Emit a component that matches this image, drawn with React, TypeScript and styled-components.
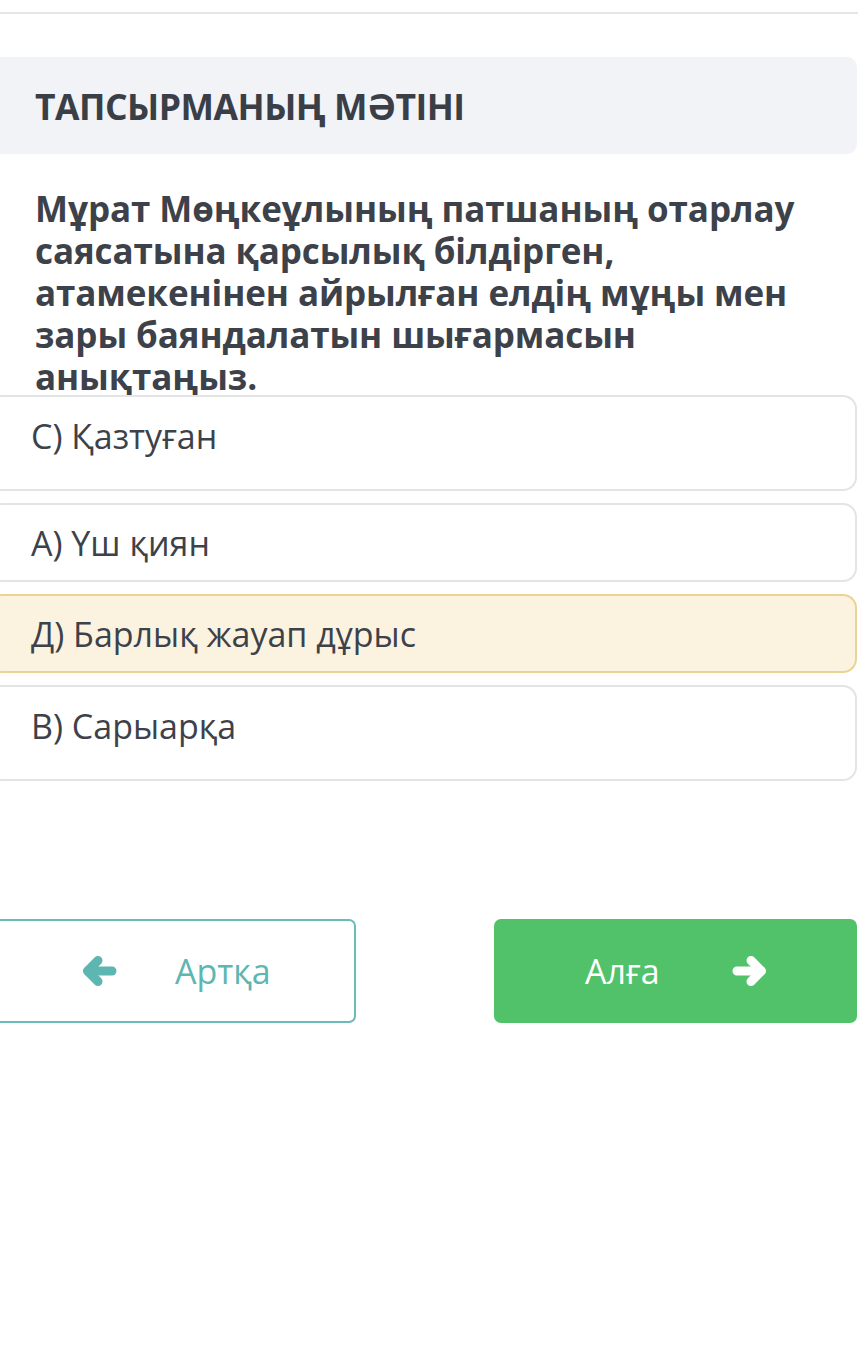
import React from "react";
import styled, { createGlobalStyle } from "styled-components";

const GlobalStyle = createGlobalStyle`
  html, body {
    margin: 0;
    padding: 0;
    background: #ffffff;
  }
  body {
    font-family: "Open Sans", "Noto Sans", sans-serif;
    color: #3d4149;
    overflow-x: hidden;
  }
`;

type Option = {
  label: string;
  tall?: boolean;
  selected?: boolean;
};

const options: Option[] = [
  { label: "C) Қазтуған", tall: true },
  { label: "A) Үш қиян" },
  { label: "Д) Барлық жауап дұрыс", selected: true },
  { label: "B) Сарыарқа", tall: true },
];

// chunky arrow like the old font-awesome glyph
const Arrow: React.FunctionComponent<{ dir: "left" | "right" }> = ({ dir }) => (
  <svg
    width="35"
    height="32"
    viewBox="0 0 35 32"
    style={dir === "right" ? { transform: "scaleX(-1)" } : undefined}
  >
    <g
      fill="none"
      stroke="currentColor"
      strokeWidth="9"
      strokeLinecap="round"
      strokeLinejoin="round"
    >
      <polyline points="16,5.5 5.5,16 16,26.5" />
      <line x1="6" y1="16" x2="30" y2="16" />
    </g>
  </svg>
);

const App: React.FunctionComponent<{}> = () => {
  return (
    <>
      <GlobalStyle />
      <Page>
        <TopRule />
        <Content>
          <TaskHeader>
            <TaskTitle>ТАПСЫРМАНЫҢ МӘТІНІ</TaskTitle>
          </TaskHeader>

          <Question>
            Мұрат Мөңкеұлының патшаның отарлау саясатына қарсылық білдірген,
            атамекенінен айрылған елдің мұңы мен зары баяндалатын шығармасын
            анықтаңыз.
          </Question>

          <OptionList>
            {options.map(o => (
              <OptionBox key={o.label} $tall={o.tall} $selected={o.selected}>
                {o.label}
              </OptionBox>
            ))}
          </OptionList>

          <NavRow>
            <BackButton>
              <Arrow dir="left" />
              <span>Артқа</span>
            </BackButton>
            <NextButton>
              <span>Алға</span>
              <Arrow dir="right" />
            </NextButton>
          </NavRow>
        </Content>
      </Page>
    </>
  );
};

const Page = styled.div`
  width: 858px;
  min-height: 1366px;
  padding-top: 12px;
  box-sizing: border-box;
`;

const TopRule = styled.div`
  height: 2px;
  background: #e6e6e8;
`;

const Content = styled.div`
  margin-left: -12px;
  width: 869px;
  display: flex;
  flex-direction: column;
`;

const TaskHeader = styled.div`
  margin-top: 43px;
  height: 97px;
  background: #f2f3f7;
  border-radius: 10px;
  display: flex;
  align-items: center;
  padding-left: 47px;
`;

const TaskTitle = styled.h2`
  margin: 0;
  font-size: 35.5px;
  font-weight: 700;
  color: #3a3f47;
  letter-spacing: -0.5px;
`;

const Question = styled.p`
  margin: 34px 0 0;
  padding: 0 40px 0 47px;
  font-size: 35px;
  line-height: 42px;
  font-weight: 700;
  color: #3d4149;
  letter-spacing: -0.1px;
`;

const OptionList = styled.div`
  margin-top: -3px;
  display: flex;
  flex-direction: column;
  gap: 12px;
`;

const OptionBox = styled.div<{ $tall?: boolean; $selected?: boolean }>`
  box-sizing: border-box;
  height: ${p => (p.$tall ? "96px" : "79px")};
  padding: ${p => (p.$tall ? "18px 0 0 41px" : "0 0 0 41px")};
  display: flex;
  align-items: ${p => (p.$tall ? "flex-start" : "center")};
  border: 2px solid ${p => (p.$selected ? "#ead393" : "#e2e4e8")};
  background: ${p => (p.$selected ? "#fbf3df" : "#ffffff")};
  border-radius: 14px;
  font-size: 34px;
  line-height: 42px;
  color: #3d4149;
`;

const NavRow = styled.div`
  margin-top: 138px;
  display: flex;
  justify-content: space-between;
`;

const NavButton = styled.div`
  box-sizing: border-box;
  height: 104px;
  border-radius: 7px;
  display: flex;
  align-items: center;
  font-size: 34px;
`;

const BackButton = styled(NavButton)`
  width: 368px;
  border: 2px solid #6bbcb7;
  color: #5db6b1;
  background: #ffffff;
  padding-left: 92px;
  gap: 58px;
`;

const NextButton = styled(NavButton)`
  width: 363px;
  background: #52c26a;
  color: #ffffff;
  padding-left: 91px;
  gap: 72px;
`;

export default App;
